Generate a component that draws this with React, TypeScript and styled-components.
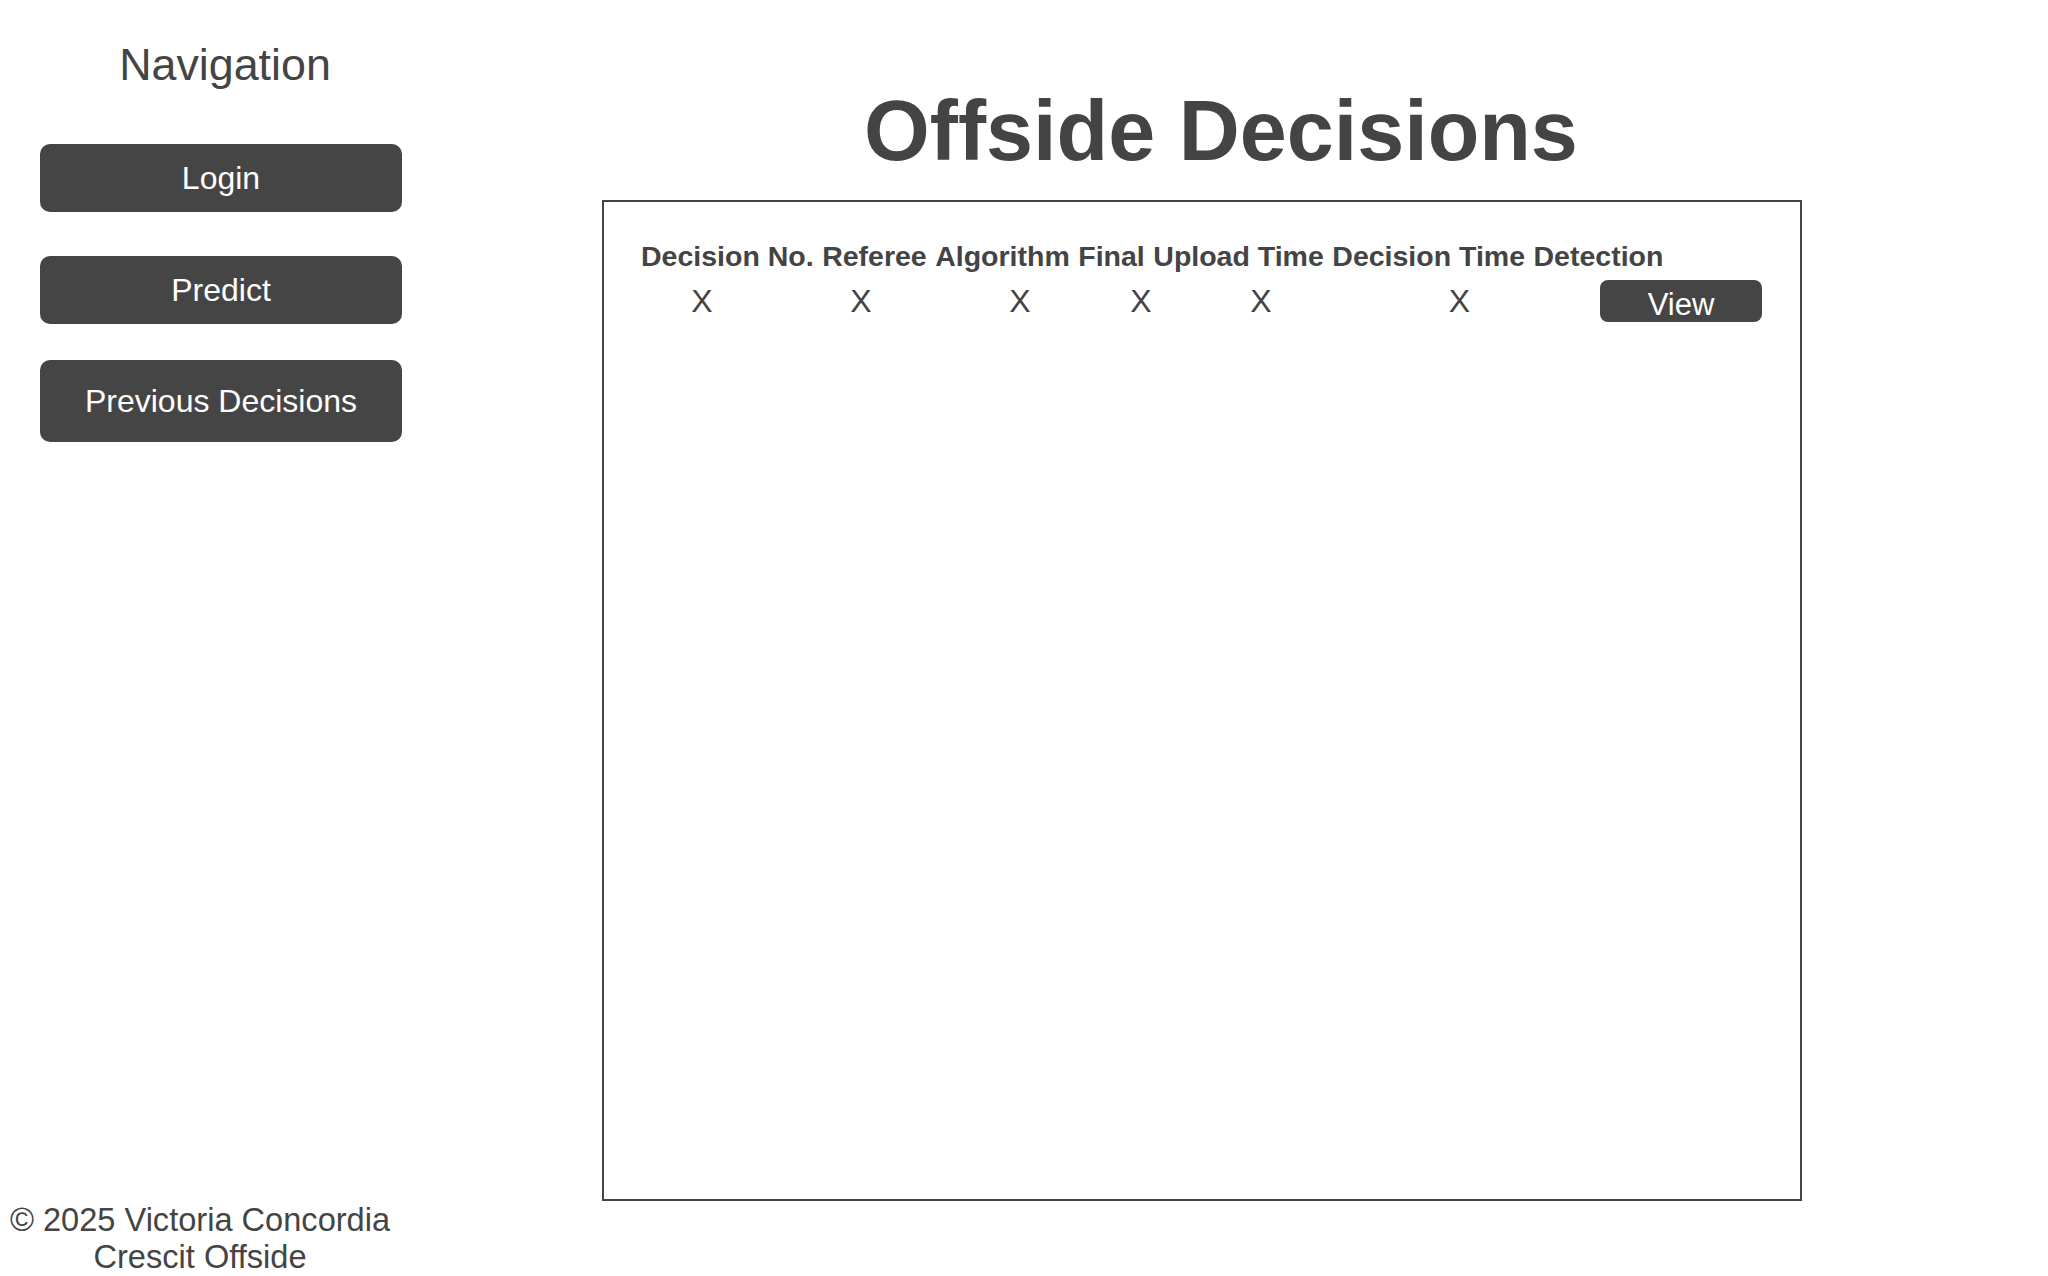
import React from "react";
import styled, { createGlobalStyle } from "styled-components";

const GlobalStyle = createGlobalStyle`
  html, body {
    margin: 0;
    padding: 0;
    background: #ffffff;
  }
  body {
    font-family: "Liberation Sans", Arial, sans-serif;
    color: #444444;
  }
  * {
    box-sizing: border-box;
  }
`;

const Page = styled.div`
  display: flex;
  min-height: 100vh;
`;

const Sidebar = styled.aside`
  width: 450px;
  height: 100vh;
  flex-shrink: 0;
  display: flex;
  flex-direction: column;
`;

const NavTitle = styled.h2`
  margin: 39px 0 0;
  font-size: 44.8px;
  line-height: 50px;
  font-weight: 400;
  text-align: center;
  color: #444444;
`;

const NavList = styled.nav`
  display: flex;
  flex-direction: column;
  padding-left: 40px;
`;

const NavButton = styled.button<{ $top: number; $tall?: boolean }>`
  width: 362px;
  height: ${(p) => (p.$tall ? 82 : 68)}px;
  margin-top: ${(p) => p.$top}px;
  padding: 0;
  border: none;
  border-radius: 10px;
  background: #454545;
  color: #ffffff;
  font-family: "Liberation Sans", Arial, sans-serif;
  font-size: 32px;
  line-height: 36px;
  cursor: pointer;
`;

const Footer = styled.footer`
  margin-top: auto;
  width: 400px;
  padding-bottom: 1px;
  text-align: center;
  font-size: 32.6px;
  line-height: 37px;
  color: #444444;
`;

const Main = styled.main`
  flex: 1;
  display: flex;
  flex-direction: column;
  padding-left: 152px;
`;

const Title = styled.h1`
  width: 1238px;
  margin: 83px 0 21px;
  font-size: 84.5px;
  line-height: 96px;
  font-weight: 700;
  text-align: center;
  color: #444444;
`;

const TableBox = styled.section`
  width: 1200px;
  height: 1001px;
  border: 2px solid #444444;
  padding: 38px 0 0 37px;
`;

const HeaderRow = styled.div`
  display: flex;
  gap: 8.5px;
  font-size: 28.5px;
  line-height: 32px;
  font-weight: 700;
  color: #444444;
  white-space: nowrap;
`;

const DataRow = styled.div`
  margin-top: 8px;
  margin-left: 2px;
  display: grid;
  grid-template-columns: 118px 200px 118px 124px 116px 281px 162px;
  align-items: center;
  justify-items: center;
  height: 42px;
`;

const Cell = styled.span`
  font-size: 32px;
  line-height: 37px;
  color: #444444;
`;

const ViewButton = styled.button`
  width: 162px;
  height: 42px;
  padding: 7px 0 0;
  border: none;
  border-radius: 8px;
  background: #454545;
  color: #ffffff;
  font-family: "Liberation Sans", Arial, sans-serif;
  font-size: 31px;
  line-height: 35px;
  cursor: pointer;
`;

const columns = [
  "Decision No.",
  "Referee",
  "Algorithm",
  "Final",
  "Upload Time",
  "Decision Time",
  "Detection",
];

const navItems = [
  { label: "Login", top: 55 },
  { label: "Predict", top: 44 },
  { label: "Previous Decisions", top: 36, tall: true },
];

export default function App() {
  return (
    <>
      <GlobalStyle />
      <Page>
        <Sidebar>
          <NavTitle>Navigation</NavTitle>
          <NavList>
            {navItems.map((item) => (
              <NavButton key={item.label} $top={item.top} $tall={item.tall}>
                {item.label}
              </NavButton>
            ))}
          </NavList>
          <Footer>
            © 2025 Victoria Concordia
            <br />
            Crescit Offside
          </Footer>
        </Sidebar>
        <Main>
          <Title>Offside Decisions</Title>
          <TableBox>
            <HeaderRow>
              {columns.map((c) => (
                <span key={c}>{c}</span>
              ))}
            </HeaderRow>
            <DataRow>
              <Cell>X</Cell>
              <Cell>X</Cell>
              <Cell>X</Cell>
              <Cell>X</Cell>
              <Cell>X</Cell>
              <Cell>X</Cell>
              <ViewButton>View</ViewButton>
            </DataRow>
          </TableBox>
        </Main>
      </Page>
    </>
  );
}
